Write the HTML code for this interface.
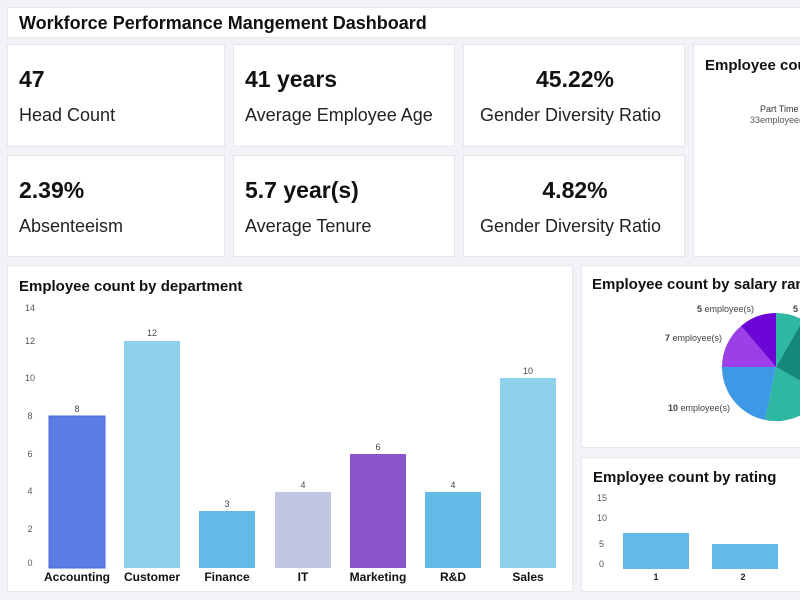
<!DOCTYPE html>
<html><head><meta charset="utf-8"><style>
*{margin:0;padding:0;box-sizing:border-box}
html,body{width:800px;height:600px;overflow:hidden}
body{background:#f3f2f6;font-family:"Liberation Sans",sans-serif;position:relative;color:#111}
.b{position:absolute;background:#fff;border:1px solid #e6e5ea;overflow:hidden}
.r{border-right:none}
.title{left:7px;top:7px;width:793px;height:31px;font-weight:bold;font-size:18px;padding:5px 11px}
.card .v{position:absolute;top:21px;font-size:23px;font-weight:bold}
.card .l{position:absolute;top:60px;font-size:18px;color:#222}
.h{position:absolute;font-weight:bold;font-size:15px;white-space:nowrap}
svg{position:absolute;left:0;top:0}
</style></head><body>
<div class="b title r">Workforce Performance Mangement Dashboard</div>

<div class="b card" style="left:7px;top:44px;width:218px;height:103px"><div class="v" style="left:11px">47</div><div class="l" style="left:11px">Head Count</div></div>
<div class="b card" style="left:233px;top:44px;width:222px;height:103px"><div class="v" style="left:11px">41 years</div><div class="l" style="left:11px">Average Employee Age</div></div>
<div class="b card" style="left:463px;top:44px;width:222px;height:103px"><div class="v" style="left:0;width:222px;text-align:center">45.22%</div><div class="l" style="left:16px">Gender Diversity Ratio</div></div>
<div class="b card" style="left:7px;top:155px;width:218px;height:102px"><div class="v" style="left:11px">2.39%</div><div class="l" style="left:11px">Absenteeism</div></div>
<div class="b card" style="left:233px;top:155px;width:222px;height:102px"><div class="v" style="left:11px">5.7 year(s)</div><div class="l" style="left:11px">Average Tenure</div></div>
<div class="b card" style="left:463px;top:155px;width:222px;height:102px"><div class="v" style="left:0;width:222px;text-align:center">4.82%</div><div class="l" style="left:16px">Gender Diversity Ratio</div></div>

<div class="b r" style="left:693px;top:44px;width:107px;height:213px">
<div class="h" style="left:11px;top:12px">Employee count by type</div>
<div style="position:absolute;left:66px;top:59px;font-size:9px;color:#333;white-space:nowrap">Part Time</div>
<div style="position:absolute;left:56px;top:70px;font-size:9px;color:#555;white-space:nowrap">33employee(s)</div>
</div>

<div class="b" style="left:7px;top:265px;width:566px;height:327px">
<div class="h" style="left:11px;top:12px">Employee count by department</div>
</div>
<div class="b r" style="left:581px;top:265px;width:219px;height:183px">
<div class="h" style="left:10px;top:10px">Employee count by salary range</div>
</div>
<div class="b r" style="left:581px;top:457px;width:219px;height:135px">
<div class="h" style="left:11px;top:11px">Employee count by rating</div>
</div>

<svg width="800" height="600" viewBox="0 0 800 600">
<g font-family="Liberation Sans" font-size="9" fill="#555" text-anchor="middle">
<text x="30" y="311">14</text><text x="30" y="344">12</text><text x="30" y="381">10</text><text x="30" y="419">8</text><text x="30" y="457">6</text><text x="30" y="494">4</text><text x="30" y="532">2</text><text x="30" y="566">0</text>
</g>
<rect x="49" y="416" width="56" height="152" fill="#5b7ce3" stroke="#4a6ae0"/>
<rect x="124" y="341" width="56" height="227" fill="#8dd1ea"/>
<rect x="199" y="511" width="56" height="57" fill="#62bbe6"/>
<rect x="275" y="492" width="56" height="76" fill="#c2c6e2"/>
<rect x="350" y="454" width="56" height="114" fill="#8a55cc"/>
<rect x="425" y="492" width="56" height="76" fill="#62bbe6"/>
<rect x="500" y="378" width="56" height="190" fill="#8dd1ea"/>
<g font-family="Liberation Sans" font-size="9" fill="#444" text-anchor="middle">
<text x="77" y="412">8</text><text x="152" y="336">12</text><text x="227" y="507">3</text><text x="303" y="488">4</text><text x="378" y="450">6</text><text x="453" y="488">4</text><text x="528" y="374">10</text>
</g>
<g font-family="Liberation Sans" font-size="12" font-weight="bold" fill="#111" text-anchor="middle">
<text x="77" y="581">Accounting</text><text x="152" y="581">Customer</text><text x="227" y="581">Finance</text><text x="303" y="581">IT</text><text x="378" y="581">Marketing</text><text x="453" y="581">R&amp;D</text><text x="528" y="581">Sales</text>
</g>
<g transform="translate(776,367)">
<path d="M0 0 L0 -54 A54 54 0 0 1 27 -47 Z" fill="#2eb8a2"/>
<path d="M0 0 L27 -47 A54 54 0 0 1 47 27 Z" fill="#14897a"/>
<path d="M0 0 L47 27 A54 54 0 0 1 -11 53 Z" fill="#2eb8a2"/>
<path d="M0 0 L-11 53 A54 54 0 0 1 -54 0 Z" fill="#3d98e6"/>
<path d="M0 0 L-54 0 A54 54 0 0 1 -35 -41 Z" fill="#9b3fe6"/>
<path d="M0 0 L-35 -41 A54 54 0 0 1 0 -54 Z" fill="#6b06d6"/>
</g>
<g font-family="Liberation Sans" font-size="9" fill="#444">
<text x="697" y="312"><tspan font-weight="bold">5</tspan> employee(s)</text>
<text x="793" y="312"><tspan font-weight="bold">5</tspan></text>
<text x="665" y="341"><tspan font-weight="bold">7</tspan> employee(s)</text>
<text x="668" y="411"><tspan font-weight="bold">10</tspan> employee(s)</text>
</g>
<g font-family="Liberation Sans" font-size="9" fill="#555">
<text x="597" y="501">15</text><text x="597" y="521">10</text><text x="599" y="547">5</text><text x="599" y="567">0</text>
</g>
<rect x="623" y="533" width="66" height="36" fill="#62bbe6"/>
<rect x="712" y="544" width="66" height="25" fill="#62bbe6"/>
<g font-family="Liberation Sans" font-size="9" font-weight="bold" fill="#222" text-anchor="middle">
<text x="656" y="580">1</text><text x="743" y="580">2</text>
</g>
</svg>
</body></html>
